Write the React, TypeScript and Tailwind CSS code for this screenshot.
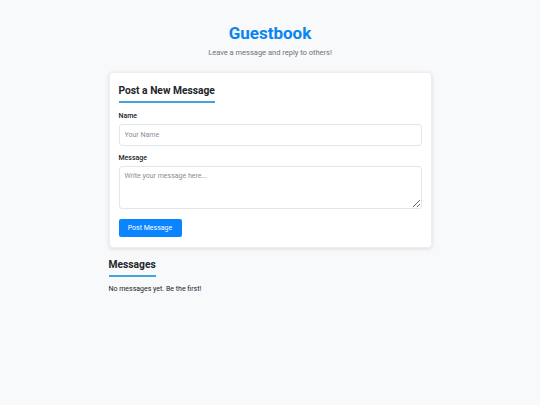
function Heading({ children }: { children: React.ReactNode }) {
  return (
    <div className="w-fit">
      <h2 className="text-[10.25px] font-bold leading-[14px] text-[#212529]">{children}</h2>
      <div className="mt-[3px] h-[2px] w-full bg-[#45a3d8]" />
    </div>
  );
}

export default function App() {
  return (
    <div className="min-h-[405px] w-full bg-[#f7f9fb] text-[#212529]" style={{ fontFamily: "Roboto, 'Liberation Sans', sans-serif" }}>
      <div className="mx-auto w-[323px] pt-[21px]">
        <h1 className="text-center text-[17px] font-bold leading-[24px] text-[#0a84f0]">Guestbook</h1>
        <p className="mt-[3px] text-center text-[7.5px] leading-[10px] text-[#6c757d]">Leave a message and reply to others!</p>

        <div className="mt-[14px] rounded-[4px] border border-[#eceef0] bg-white px-[9px] pb-[10px] pt-[11px] shadow-[0_1px_4px_rgba(0,0,0,0.12)]">
          <Heading>Post a New Message</Heading>

          <label className="mt-[9px] block text-[7px] font-medium leading-[9px]">Name</label>
          <input
            className="mt-[3px] block h-[22px] w-full rounded-[3px] border border-[#e3e6ea] bg-white px-[5px] text-[7px] outline-none placeholder:text-[#888e94]"
            placeholder="Your Name"
          />

          <label className="mt-[8px] block text-[7px] font-medium leading-[9px]">Message</label>
          <textarea
            className="mt-[3px] block h-[43px] w-full resize-y rounded-[3px] border border-[#e3e6ea] bg-white px-[5px] py-[4px] text-[7px] leading-[10px] outline-none placeholder:text-[#888e94]"
            placeholder="Write your message here..."
          />

          <button className="mt-[10px] h-[18px] w-[63px] rounded-[2px] bg-[#0a84ff] text-[7px] leading-[9px] text-white">Post Message</button>
        </div>

        <div className="mt-[10px]">
          <Heading>Messages</Heading>
        </div>
        <p className="mt-[8px] text-[7px] leading-[9px]">No messages yet. Be the first!</p>
      </div>
    </div>
  );
}
